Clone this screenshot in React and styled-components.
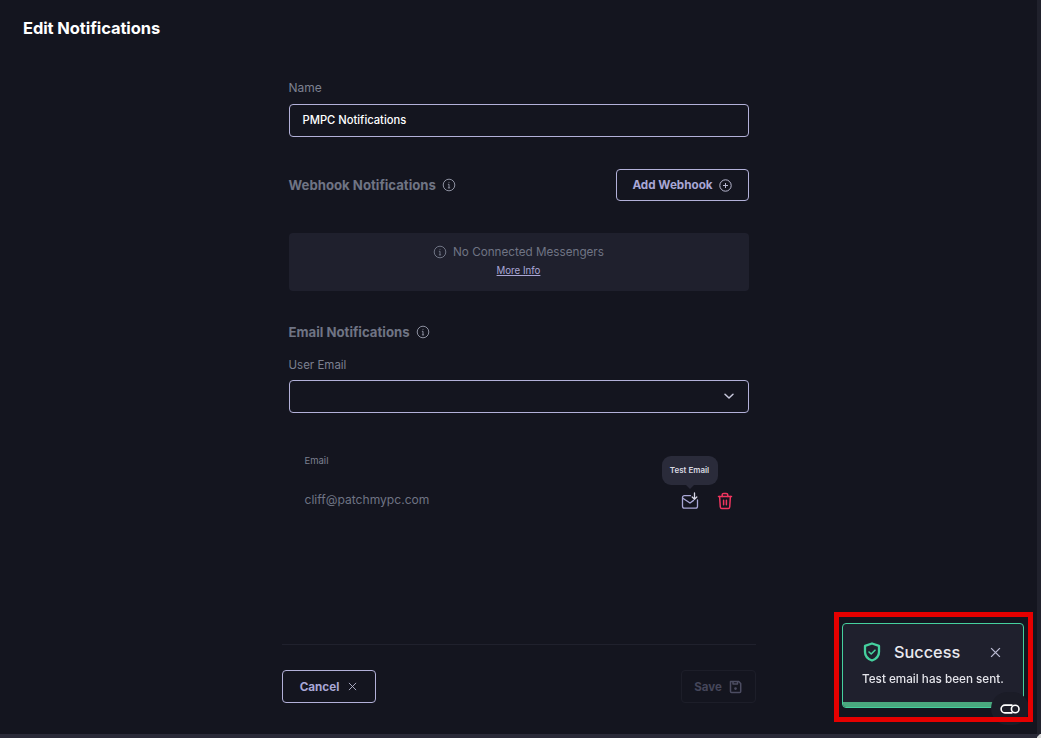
import React from 'react';
import styled, { createGlobalStyle } from 'styled-components';

const colors = {
    page: '#14151f',
    panel: '#1f202d',
    tooltip: '#2a2b3a',
    outline: '#b3b1d9',
    periwinkle: '#a9a7d6',
    muted: '#6f7484',
    label: '#7c8090',
    white: '#ffffff',
    green: '#45d09e',
    bar: '#4aa87e',
    red: '#f0355f',
    divider: '#20212d'
};

const fontStack = '"Inter", "Liberation Sans", sans-serif';

const GlobalStyle = createGlobalStyle`
    html, body {
        margin: 0;
        padding: 0;
        background: ${colors.page};
        font-family: ${fontStack};
        overflow: hidden;
    }
    * {
        box-sizing: border-box;
    }
`;

const Window = styled.div`
    width: 1041px;
    height: 738px;
    display: flex;
    flex-direction: column;
    background: ${colors.page};
    overflow: hidden;
`;

const Body = styled.div`
    flex: 1;
    min-height: 0;
    display: flex;
    flex-direction: column;
    border-right: 4px solid #20212c;
`;

const BottomEdge = styled.div`
    height: 4px;
    display: flex;
    justify-content: flex-end;
    background: #2a2a38;
`;

const ScrollCorner = styled.div`
    width: 4px;
    height: 4px;
    background: linear-gradient(135deg, #2a2a38 35%, #d6d6d6 40%);
`;

const Title = styled.h1`
    margin: 0;
    padding: 18px 0 0 23px;
    height: 65px;
    font-size: 16.5px;
    line-height: 20px;
    font-weight: 700;
    letter-spacing: -0.1px;
    color: ${colors.white};
`;

const Form = styled.div`
    width: 460px;
    margin: 0 auto;
    flex: 1;
    display: flex;
    flex-direction: column;
`;

const Label = styled.div`
    font-size: 11.5px;
    line-height: 16px;
    color: ${colors.label};
`;

const NameLabel = styled(Label)`
    margin-top: 15px;
    margin-bottom: 8px;
    font-size: 12px;
`;

const Field = styled.div`
    height: 33px;
    display: flex;
    align-items: center;
    justify-content: space-between;
    padding: 0 13px 1px;
    border: 1px solid ${colors.outline};
    border-radius: 4px;
    font-size: 11.2px;
    font-weight: 500;
    color: ${colors.white};
`;

const SectionRow = styled.div`
    display: flex;
    align-items: center;
    justify-content: space-between;
    margin-top: 32px;
    height: 32px;
`;

const SectionTitle = styled.div`
    display: flex;
    align-items: center;
    gap: 6px;
    padding-bottom: 1px;
    font-size: 13.2px;
    line-height: 18px;
    font-weight: 700;
    color: ${colors.muted};
`;

const OutlineButton = styled.button`
    height: ${props => props.height}px;
    width: ${props => props.width}px;
    display: flex;
    align-items: center;
    justify-content: center;
    gap: ${props => props.gap || 6}px;
    background: transparent;
    border: 1px solid ${colors.outline};
    border-radius: 4px;
    font-family: ${fontStack};
    font-size: 11.7px;
    font-weight: 700;
    color: ${colors.periwinkle};
    padding: 0;
`;

const EmptyPanel = styled.div`
    margin-top: 32px;
    height: 58px;
    background: ${colors.panel};
    border-radius: 4px;
    display: flex;
    flex-direction: column;
    align-items: center;
    padding-top: 11px;
`;

const EmptyText = styled.div`
    display: flex;
    align-items: center;
    gap: 6px;
    font-size: 11.7px;
    line-height: 16px;
    color: ${colors.muted};
`;

const MoreInfo = styled.a`
    margin-top: 4px;
    font-size: 9.7px;
    line-height: 14px;
    color: ${colors.periwinkle};
    text-decoration: underline;
`;

const EmailTitle = styled(SectionTitle)`
    margin-top: 32px;
`;

const UserEmailLabel = styled(Label)`
    margin-top: 15px;
    margin-bottom: 7px;
`;

const TableBlock = styled.div`
    padding: 41px 16px 0;
`;

const ColumnHead = styled.div`
    font-size: 9.5px;
    line-height: 14px;
    color: ${colors.label};
`;

const EmailRow = styled.div`
    display: flex;
    align-items: center;
    justify-content: space-between;
    margin-top: 21px;
    height: 21px;
`;

const EmailText = styled.div`
    font-size: 12.1px;
    color: ${colors.muted};
`;

const Actions = styled.div`
    display: flex;
    align-items: center;
    gap: 18px;
    position: relative;
    top: 1px;
`;

const ActionIcon = styled.span`
    position: relative;
    display: flex;
`;

const Tooltip = styled.div`
    position: absolute;
    left: 50%;
    bottom: 25px;
    transform: translateX(-50%);
    width: 56px;
    height: 29px;
    display: flex;
    align-items: center;
    justify-content: center;
    background: ${colors.tooltip};
    border-radius: 9px;
    font-size: 8px;
    font-weight: 600;
    white-space: nowrap;
    color: #d8d8e0;

    &::after {
        content: '';
        position: absolute;
        left: 50%;
        bottom: -4px;
        margin-left: -4px;
        border-left: 4px solid transparent;
        border-right: 4px solid transparent;
        border-top: 4px solid ${colors.tooltip};
    }
`;

const Footer = styled.div`
    width: 474px;
    margin: 0 auto;
    height: 90px;
    padding-top: 25px;
    border-top: 1px solid ${colors.divider};
    display: flex;
    justify-content: space-between;
    align-items: flex-start;
`;

const SaveButton = styled.button`
    width: 75px;
    height: 33px;
    display: flex;
    align-items: center;
    justify-content: center;
    gap: 7px;
    padding: 0;
    background: transparent;
    border: 1px solid #1d1e29;
    border-radius: 4px;
    font-family: ${fontStack};
    font-size: 11.5px;
    font-weight: 700;
    color: #45465a;
`;

const Annotation = styled.div`
    position: fixed;
    left: 834px;
    top: 612px;
    width: 199px;
    height: 110px;
    border: 5px solid #e60000;
`;

const Toast = styled.div`
    position: fixed;
    left: 842px;
    top: 623px;
    width: 182px;
    height: 85px;
    background: ${colors.panel};
    border: 1px solid ${colors.green};
    border-radius: 4px;
    overflow: hidden;
    padding: 16px 20px 0;
`;

const ToastHead = styled.div`
    display: flex;
    align-items: center;
    height: 24px;
    padding-right: 2px;
`;

const ToastTitle = styled.div`
    margin-left: 13px;
    flex: 1;
    font-size: 16.3px;
    font-weight: 500;
    color: #e9e9ef;
`;

const ToastMessage = styled.div`
    margin: 7px 0 0 -1px;
    font-size: 11.7px;
    font-weight: 500;
    line-height: 16px;
    white-space: nowrap;
    color: #e4e4ea;
`;

const ProgressBar = styled.div`
    position: absolute;
    left: 0;
    bottom: 0;
    height: 5px;
    width: 100%;
    background: ${colors.bar};
`;

const CornerBadge = styled.div`
    position: fixed;
    left: 991px;
    top: 692px;
    width: 38px;
    height: 33px;
    border-radius: 19px;
    background: #1b1c27;
    display: flex;
    align-items: center;
    justify-content: center;
    padding-top: 1px;
`;

const InfoIcon = ({ size = 14, color = '#8d90a0' }) => (
    <svg width={size} height={size} viewBox="0 0 14 14" fill="none" stroke={color} strokeWidth="1">
        <circle cx="7" cy="7" r="5.8" />
        <path d="M7 6.3v3.6M5.9 9.9h2.2M5.9 6.3H7" />
        <circle cx="7" cy="4.2" r="0.5" fill={color} stroke="none" />
    </svg>
);

const PlusCircleIcon = () => (
    <svg width="13" height="13" viewBox="0 0 13 13" fill="none" stroke="#b8b8d0" strokeWidth="1">
        <circle cx="6.5" cy="6.5" r="5.7" />
        <path d="M6.5 4v5M4 6.5h5" />
    </svg>
);

const ChevronIcon = () => (
    <svg width="12" height="12" viewBox="0 0 12 12" fill="none" stroke="#c8c8dc" strokeWidth="1.5" strokeLinecap="round" strokeLinejoin="round">
        <path d="M2 4.2 6 8l4-3.8" />
    </svg>
);

const MailDownIcon = () => (
    <svg width="18" height="18" viewBox="0 0 18 18" fill="none" stroke={colors.periwinkle} strokeWidth="1.3" strokeLinecap="round" strokeLinejoin="round">
        <path d="M9.5 3.7H3.4c-1 0-1.9.8-1.9 1.9v8.6c0 1 .8 1.9 1.9 1.9h11.2c1 0 1.9-.8 1.9-1.9V8" />
        <path d="M1.8 6.2 9 11l3.6-2.6" />
        <path d="M13.5 1v6.2M11.2 5l2.3 2.3L15.8 5" stroke="#d8d8e6" />
    </svg>
);

const TrashIcon = () => (
    <svg width="16" height="18" viewBox="0 0 16 18" fill="none" stroke={colors.red} strokeWidth="1.5" strokeLinecap="round" strokeLinejoin="round">
        <path d="M1.5 4.5h13" />
        <path d="M5.2 4.5V3c0-1 .6-1.6 1.6-1.6h2.4c1 0 1.6.6 1.6 1.6v1.5" />
        <path d="M2.6 4.5 3.3 15c.1 1 .7 1.6 1.7 1.6h6c1 0 1.6-.6 1.7-1.6l.7-10.5" />
        <path d="M6.6 8.2v4.6M9.4 8.2v4.6" />
    </svg>
);

const CloseIcon = ({ size = 9, color = '#b8b8d0', weight = 1 }) => (
    <svg width={size} height={size} viewBox="0 0 10 10" fill="none" stroke={color} strokeWidth={weight}>
        <path d="M1 1l8 8M9 1 1 9" />
    </svg>
);

const SaveIcon = () => (
    <svg width="13" height="14" viewBox="0 0 13 14" fill="none" stroke="#4c4d62" strokeWidth="1.5" strokeLinejoin="round">
        <path d="M1.5 1.5h8.2l2 2v8a1 1 0 0 1-1 1h-8.2a1 1 0 0 1-1-1z" />
        <path d="M4 1.5v2.6h4.5V1.5" />
        <circle cx="6.5" cy="8.6" r="1.3" fill="#4c4d62" stroke="none" />
    </svg>
);

const ShieldIcon = () => (
    <svg width="18" height="20" viewBox="0 0 18 20" fill="none" stroke={colors.green} strokeWidth="2.3" strokeLinecap="round" strokeLinejoin="round">
        <path d="M9 1.5 16 3.9v6c0 4-2.9 7-7 8.6-4.1-1.6-7-4.6-7-8.6v-6z" />
        <path d="M6 10l2.2 2L12 8.2" strokeWidth="1.6" />
    </svg>
);

const LinkGlyph = () => (
    <svg width="20" height="10" viewBox="0 0 20 10" fill="none" stroke="#ffffff" strokeWidth="1.6">
        <path d="M12.5 1.1H5a3.9 3.9 0 0 0 0 7.8h7.5" />
        <circle cx="15.2" cy="5" r="3.8" />
    </svg>
);

const App = () => (
    <Window>
        <GlobalStyle />
        <Body>
            <Title>Edit Notifications</Title>
            <Form>
                <NameLabel>Name</NameLabel>
                <Field>PMPC Notifications</Field>
                <SectionRow>
                    <SectionTitle>Webhook Notifications <InfoIcon /></SectionTitle>
                    <OutlineButton width={133} height={32}>Add Webhook <PlusCircleIcon /></OutlineButton>
                </SectionRow>
                <EmptyPanel>
                    <EmptyText><InfoIcon color="#6f7484" /> No Connected Messengers</EmptyText>
                    <MoreInfo>More Info</MoreInfo>
                </EmptyPanel>
                <EmailTitle>Email Notifications <InfoIcon /></EmailTitle>
                <UserEmailLabel>User Email</UserEmailLabel>
                <Field><span /><ChevronIcon /></Field>
                <TableBlock>
                    <ColumnHead>Email</ColumnHead>
                    <EmailRow>
                        <EmailText>cliff@patchmypc.com</EmailText>
                        <Actions>
                            <ActionIcon>
                                <Tooltip>Test Email</Tooltip>
                                <MailDownIcon />
                            </ActionIcon>
                            <ActionIcon><TrashIcon /></ActionIcon>
                        </Actions>
                    </EmailRow>
                </TableBlock>
            </Form>
            <Footer>
                <OutlineButton width={94} height={33} gap={9}>Cancel <CloseIcon /></OutlineButton>
                <SaveButton>Save <SaveIcon /></SaveButton>
            </Footer>
        </Body>
        <BottomEdge><ScrollCorner /></BottomEdge>
        <Toast>
            <ToastHead>
                <ShieldIcon />
                <ToastTitle>Success</ToastTitle>
                <CloseIcon size={11} weight={1.2} />
            </ToastHead>
            <ToastMessage>Test email has been sent.</ToastMessage>
            <ProgressBar />
        </Toast>
        <CornerBadge><LinkGlyph /></CornerBadge>
        <Annotation />
    </Window>
);

export default App;
